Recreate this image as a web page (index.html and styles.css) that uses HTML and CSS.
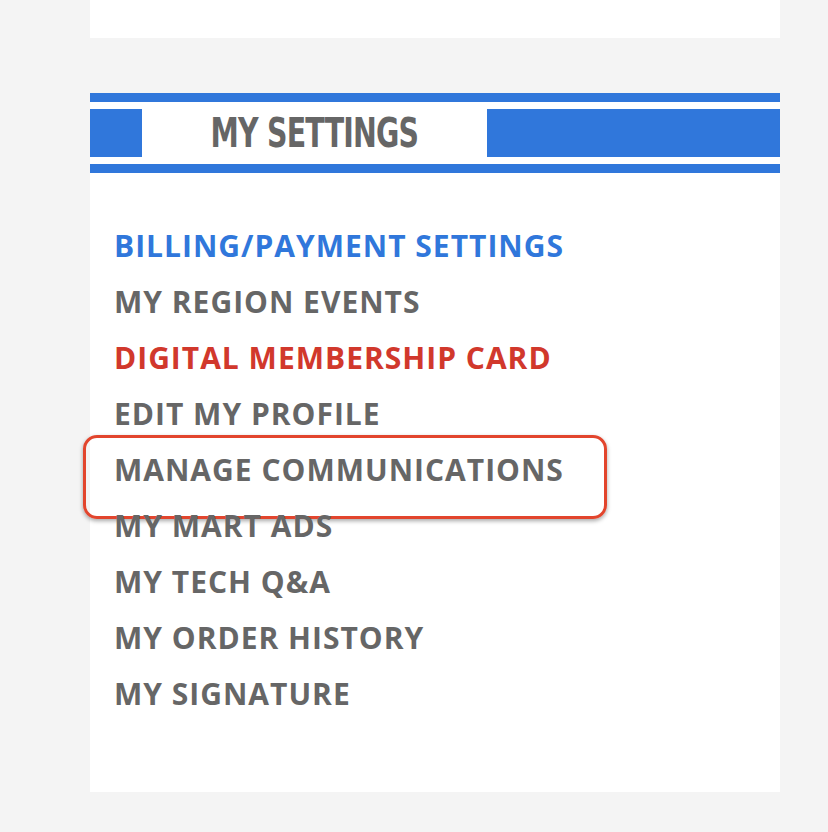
FILE: index.html
```html
<!DOCTYPE html>
<html lang="en">

<head>
  <meta charset="UTF-8">
  <meta name="viewport" content="width=device-width, initial-scale=1.0">
  <title>My Settings</title>
  <link rel="stylesheet" href="styles.css">
</head>

<body>
  <div class="page">
    <!-- Card above, scrolled mostly out of view -->
    <div class="top-card">
      <div class="top-row">
        <span class="top-link">PASSWORD</span>
        <span class="top-link">MEMBERSHIP</span>
      </div>
    </div>

    <div class="settings-card">
      <div class="settings-head">
        <div class="head-band">
          <div class="band-left"></div>
          <h2 class="band-title"><span>MY SETTINGS</span></h2>
          <div class="band-right"></div>
        </div>
      </div>

      <ul class="settings-list">
        <li><a href="#" class="link-blue">BILLING/PAYMENT SETTINGS</a></li>
        <li><a href="#">MY REGION EVENTS</a></li>
        <li><a href="#" class="link-red">DIGITAL MEMBERSHIP CARD</a></li>
        <li><a href="#">EDIT MY PROFILE</a></li>
        <li class="highlighted"><a href="#">MANAGE COMMUNICATIONS</a></li>
        <li><a href="#">MY MART ADS</a></li>
        <li><a href="#">MY TECH Q&amp;A</a></li>
        <li><a href="#">MY ORDER HISTORY</a></li>
        <li><a href="#">MY SIGNATURE</a></li>
      </ul>
    </div>
  </div>
</body>

</html>
```

FILE: styles.css
```css
/* Reset */
* {
  margin: 0;
  padding: 0;
  box-sizing: border-box;
}

body {
  font-family: 'Open Sans', 'Liberation Sans', sans-serif;
  background-color: #f4f4f4;
  color: #666;
  overflow: hidden;
}

.page {
  width: 690px;
  margin-left: 90px;
}

/* Card above */
.top-card {
  display: flow-root;
  height: 38px;
  background-color: #fff;
  overflow: hidden;
}

.top-row {
  display: flex;
  padding-left: 31px;
  margin-top: -27px;
  font-size: 28px;
  font-weight: 700;
  color: #aaa;
  line-height: 31px;
  letter-spacing: 1px;
  white-space: nowrap;
}

.top-link:first-child {
  width: 376px;
}

/* Settings card */
.settings-card {
  margin-top: 55px;
  height: 699px;
  background-color: #fff;
}

.settings-head {
  border-top: 9px solid #3077db;
  border-bottom: 9px solid #3077db;
  padding: 7px 0;
}

.head-band {
  display: flex;
  height: 48px;
}

.band-left {
  width: 52px;
  background-color: #3077db;
}

.band-title {
  width: 345px;
  display: flex;
  justify-content: center;
  align-items: center;
  font-family: 'DejaVu Sans Condensed', 'DejaVu Sans', sans-serif;
  font-stretch: condensed;
  font-size: 40px;
  font-weight: 700;
  color: #666;
  letter-spacing: -1px;
}

.band-title span {
  display: inline-block;
  transform: scaleX(0.79);
  white-space: nowrap;
}

.band-right {
  flex: 1;
  background-color: #3077db;
}

/* Menu links */
.settings-list {
  list-style: none;
  padding: 45px 0 0 24px;
}

.settings-list li {
  position: relative;
  font-size: 30px;
  line-height: 56px;
}

.settings-list a {
  font-weight: 700;
  color: #666;
  letter-spacing: 1px;
  text-decoration: none;
}

.settings-list a.link-blue {
  color: #3077db;
}

.settings-list a.link-red {
  color: #d1382c;
}

/* Annotation box drawn over the item */
.highlighted::after {
  content: '';
  position: absolute;
  left: -31px;
  top: -7px;
  width: 518px;
  height: 78px;
  border: 3px solid #e2452d;
  border-radius: 14px;
  box-shadow: 0 2px 4px rgba(0, 0, 0, 0.35);
}
```
